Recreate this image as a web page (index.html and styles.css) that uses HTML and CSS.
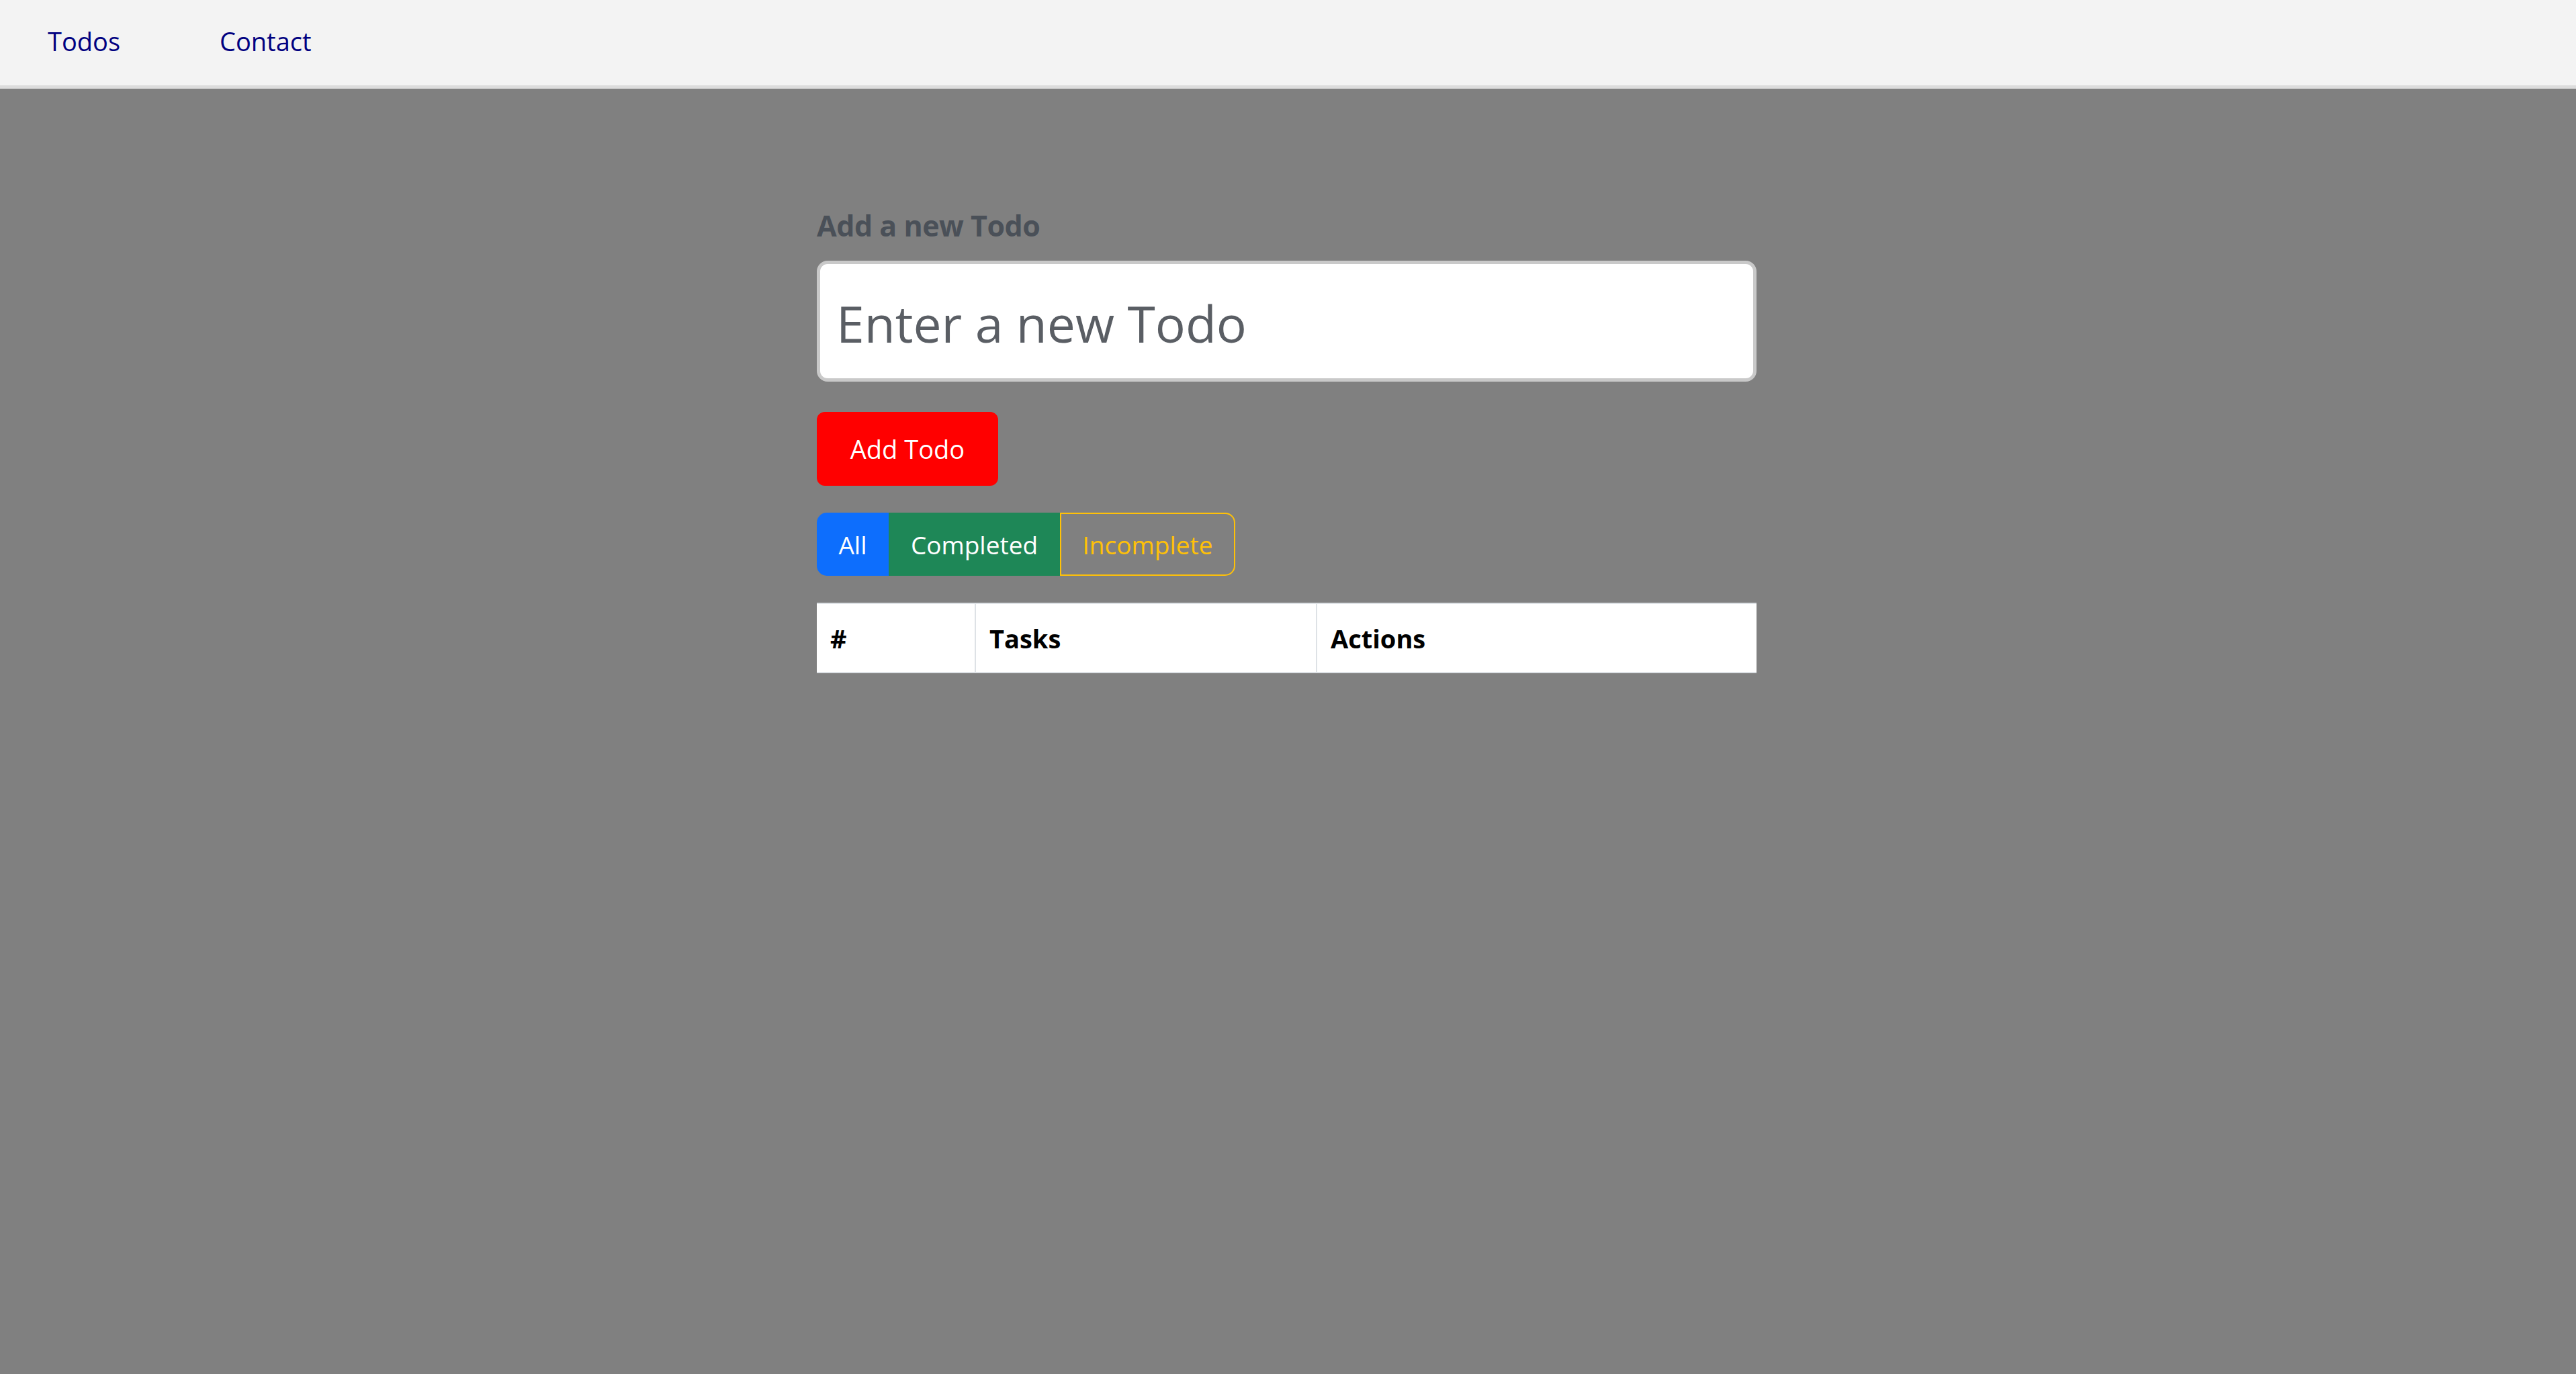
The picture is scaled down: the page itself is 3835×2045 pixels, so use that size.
FILE: index.html
```html
<!DOCTYPE html>
<html lang="en">
<head>
<meta charset="utf-8">
<title>Todos</title>
<link rel="stylesheet" href="styles.css">
</head>
<body>
<nav class="navbar">
  <a class="nav-link" href="#">Todos</a>
  <a class="nav-link" href="#">Contact</a>
</nav>
<div class="page">
  <main class="container">
    <label class="form-label" for="todo">Add a new Todo</label>
    <input class="todo-input" id="todo" type="text" placeholder="Enter a new Todo">
    <div class="add-row">
      <button class="btn-add" type="button">Add Todo</button>
    </div>
    <div class="filter-group">
      <button class="filter filter-all" type="button">All</button>
      <button class="filter filter-completed" type="button">Completed</button>
      <button class="filter filter-incomplete" type="button">Incomplete</button>
    </div>
    <table class="todo-table">
      <thead>
        <tr>
          <th class="col-num">#</th>
          <th class="col-task">Tasks</th>
          <th class="col-actions">Actions</th>
        </tr>
      </thead>
    </table>
  </main>
</div>
</body>
</html>
```

FILE: styles.css
```css
html, body {
  margin: 0;
  padding: 0;
}

body {
  background: #808080;
  font-family: "Open Sans", "Noto Sans", sans-serif;
  min-height: 2045px;
}

.navbar {
  box-sizing: border-box;
  height: 132px;
  background: #f3f3f3;
  border-bottom: 5px solid #dcdcdc;
  display: flex;
  gap: 148px;
  padding: 35px 0 0 71px;
}

.nav-link {
  font-size: 38px;
  line-height: 52px;
  color: #000080;
  text-decoration: none;
}

.page {
  padding-right: 4px;
}

.container {
  width: 1399px;
  margin: 0 auto;
  padding-top: 177px;
  display: flex;
  flex-direction: column;
  align-items: flex-start;
}

.form-label {
  font-size: 43px;
  line-height: 53px;
  font-weight: 700;
  color: #4a5058;
  letter-spacing: -0.5px;
}

.todo-input {
  box-sizing: border-box;
  width: 100%;
  height: 180px;
  margin-top: 26px;
  padding: 6px 24px 0;
  border: 5px solid #c9c9c9;
  border-radius: 16px;
  background: #ffffff;
  font-family: inherit;
  font-size: 75px;
  color: #212529;
  outline: none;
}

.todo-input::placeholder {
  color: #5a5e64;
  opacity: 1;
}

.add-row {
  margin-top: 45px;
}

.btn-add {
  box-sizing: border-box;
  height: 110px;
  width: 270px;
  border: none;
  border-radius: 12px;
  background: #ff0000;
  color: #ffffff;
  font-family: inherit;
  font-size: 38px;
  padding: 0;
}

.filter-group {
  margin-top: 40px;
  display: flex;
}

.filter {
  box-sizing: border-box;
  height: 94px;
  border: none;
  font-family: inherit;
  font-size: 37px;
  color: #ffffff;
  padding: 0;
}

.filter-all {
  width: 107px;
  background: #0d6efd;
  border-radius: 15px 0 0 15px;
}

.filter-completed {
  width: 255px;
  background: #1e8757;
}

.filter-incomplete {
  width: 261px;
  background: transparent;
  border: 2px solid #ffc107;
  border-radius: 0 15px 15px 0;
  color: #ffc107;
}

.todo-table {
  margin-top: 40px;
  width: 100%;
  border-collapse: collapse;
  background: #ffffff;
  table-layout: fixed;
}

.todo-table th {
  box-sizing: border-box;
  height: 103px;
  padding: 0 20px;
  border: 2px solid #dee2e6;
  border-left: none;
  border-right: none;
  text-align: left;
  font-size: 38px;
  font-weight: 700;
  color: #000000;
}

.todo-table th + th {
  border-left: 2px solid #dee2e6;
}

.col-num { width: 236px; }
.col-task { width: 508px; }
.col-actions { width: auto; }
```
